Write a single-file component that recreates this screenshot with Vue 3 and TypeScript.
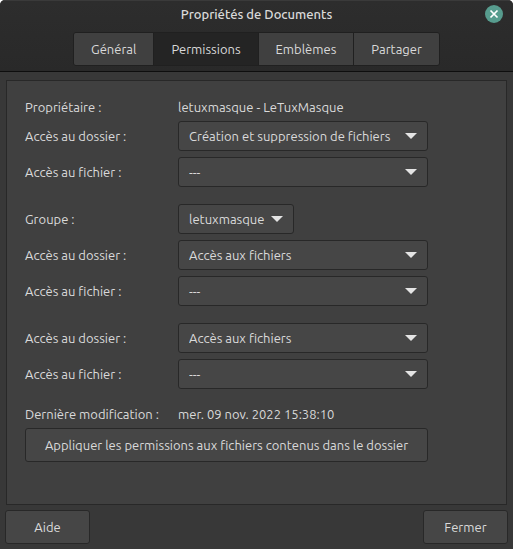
<script setup lang="ts">
import { ref } from 'vue'

interface Field {
  id: string
  label: string
  value: string
  options: string[]
  compact?: boolean
}

const tabs: string[] = ['Général', 'Permissions', 'Emblèmes', 'Partager']
const activeTab = ref('Permissions')

const folderAccess: string[] = ['Accès aux fichiers', 'Création et suppression de fichiers']
const fileAccess: string[] = ['---']

const owner = ref<Field[]>([
  { id: 'owner-folder', label: 'Accès au dossier :', value: 'Création et suppression de fichiers', options: folderAccess },
  { id: 'owner-file', label: 'Accès au fichier :', value: '---', options: fileAccess },
])
const group = ref<Field[]>([
  { id: 'group-name', label: 'Groupe :', value: 'letuxmasque', options: ['letuxmasque'], compact: true },
  { id: 'group-folder', label: 'Accès au dossier :', value: 'Accès aux fichiers', options: folderAccess },
  { id: 'group-file', label: 'Accès au fichier :', value: '---', options: fileAccess },
])
const others = ref<Field[]>([
  { id: 'others-folder', label: 'Accès au dossier :', value: 'Accès aux fichiers', options: folderAccess },
  { id: 'others-file', label: 'Accès au fichier :', value: '---', options: fileAccess },
])
const sections = [owner, group, others]
</script>

<template>
  <div class="window">
    <header class="header">
      <div class="titlebar">
        <h1 class="title">Propriétés de Documents</h1>
        <button class="close" type="button" aria-label="Fermer la fenêtre">
          <svg viewBox="0 0 18 18" width="18" height="18" aria-hidden="true">
            <circle cx="9" cy="9" r="9" fill="#579c8e" />
            <path d="M5.5 5.5 12.5 12.5M12.5 5.5 5.5 12.5" stroke="#fff" stroke-width="1.7" fill="none" />
          </svg>
        </button>
      </div>
      <nav class="tabs" role="tablist">
        <button
          v-for="tab in tabs"
          :key="tab"
          class="tab"
          :class="{ active: tab === activeTab }"
          type="button"
          role="tab"
          :aria-selected="tab === activeTab"
          @click="activeTab = tab"
        >{{ tab }}</button>
      </nav>
    </header>

    <main class="panel">
      <div class="form">
        <section v-for="(section, index) in sections" :key="index" class="section">
          <div v-if="index === 0" class="row">
            <span>Propriétaire :</span>
            <span>letuxmasque - LeTuxMasque</span>
          </div>
          <div v-for="field in section.value" :key="field.id" class="row">
            <label :for="field.id">{{ field.label }}</label>
            <div class="combo" :class="{ compact: field.compact }">
              <select :id="field.id" v-model="field.value">
                <option v-for="option in field.options" :key="option" :value="option">{{ option }}</option>
              </select>
              <svg class="arrow" viewBox="0 0 12 6" width="12" height="6" aria-hidden="true">
                <path d="M0 0H12L6 6Z" fill="#e4e4e4" />
              </svg>
            </div>
          </div>
        </section>
        <section class="section">
          <div class="row">
            <span>Dernière modification :</span>
            <span>mer. 09 nov. 2022 15:38:10</span>
          </div>
          <button class="button" type="button">Appliquer les permissions aux fichiers contenus dans le dossier</button>
        </section>
      </div>
    </main>

    <footer class="footer">
      <button class="button action" type="button">Aide</button>
      <button class="button action" type="button">Fermer</button>
    </footer>
  </div>
</template>

<style>
body {
  background: #fff;
}
</style>

<style scoped>
.window {
  box-sizing: border-box;
  display: flex;
  flex-direction: column;
  min-height: 100vh;
  background: #383838;
  border-radius: 5px 5px 0 0;
  overflow: hidden;
  color: #dadada;
  font: 13px/16px Ubuntu, "Noto Sans", sans-serif;
}

button,
select {
  box-sizing: border-box;
  margin: 0;
  font: inherit;
  color: inherit;
}

.header {
  display: flex;
  flex-direction: column;
  align-items: center;
  gap: 6px;
  padding-bottom: 5px;
  background: linear-gradient(#2d2d2d, #292929);
  border-top: 1px solid #3a3a3a;
  border-bottom: 1px solid #0e0e0e;
}

.titlebar {
  align-self: stretch;
  display: grid;
  grid-template-columns: 28px 1fr 28px;
  align-items: center;
  height: 25px;
}

.title {
  grid-column: 2;
  margin: 0;
  font-size: 13px;
  font-weight: 500;
  text-align: center;
}

.close {
  width: 18px;
  height: 18px;
  padding: 0;
  border: 0;
  background: none;
}

.close svg {
  display: block;
}

.tabs {
  display: flex;
  border: 1px solid #202020;
  border-radius: 3px;
  overflow: hidden;
}

.tab {
  height: 32px;
  padding: 0 17px;
  border: 0;
  background: #404040;
}

.tab + .tab {
  border-left: 1px solid #202020;
}

.tab.active {
  background: #242424;
}

.panel {
  flex: 1;
  margin: 8px 6px 5px;
  padding: 18px;
  background: #404040;
  border: 1px solid #282828;
}

.form {
  display: flex;
  flex-direction: column;
  gap: 17px;
  max-width: 403px;
}

.section {
  display: flex;
  flex-direction: column;
  gap: 6px;
}

.row {
  display: grid;
  grid-template-columns: 153px 1fr;
  align-items: center;
  white-space: nowrap;
}

.combo {
  position: relative;
}

.combo.compact {
  justify-self: start;
  min-width: 116px;
}

.combo select {
  appearance: none;
  display: block;
  width: 100%;
  height: 30px;
  padding: 0 26px 0 10px;
  background: #464646;
  border: 1px solid #282828;
  border-radius: 3px;
}

.arrow {
  position: absolute;
  top: 12px;
  right: 11px;
  pointer-events: none;
}

.button {
  height: 34px;
  padding: 0 10px;
  background: #464646;
  border: 1px solid #282828;
  border-radius: 3px;
  white-space: nowrap;
}

.footer {
  display: flex;
  justify-content: space-between;
  padding: 0 5px 5px;
}

.action {
  min-width: 85px;
}
</style>
